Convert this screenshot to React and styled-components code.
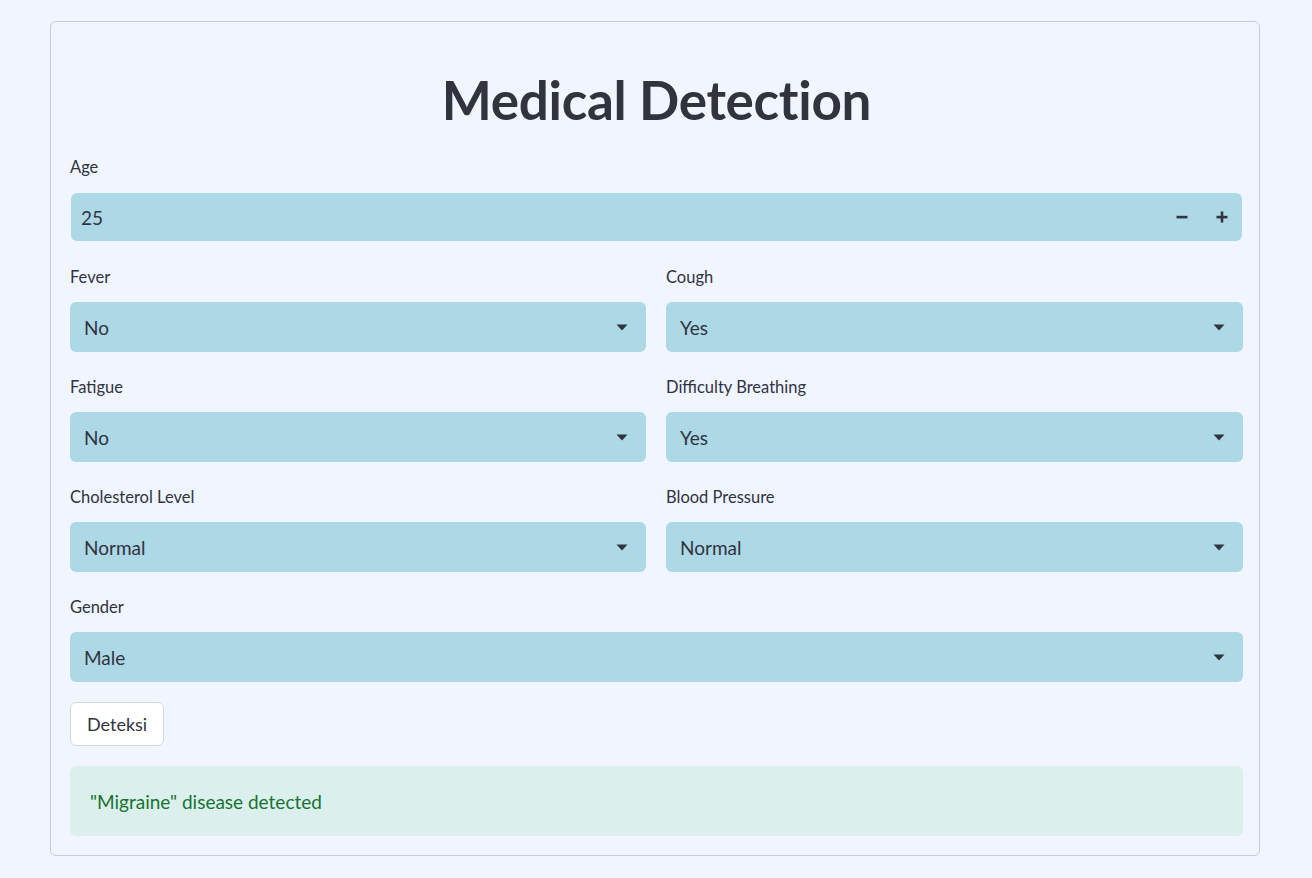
import styled, { createGlobalStyle } from "styled-components";

const GlobalStyle = createGlobalStyle`
  html, body {
    margin: 0;
    padding: 0;
    background: #f0f5ff;
    font-family: Lato, "Noto Sans", "Liberation Sans", sans-serif;
    color: #31333f;
  }
`;

const Page = styled.div`
  padding: 21px 0 22px;
`;

const Form = styled.div`
  width: 1210px;
  margin: 0 0 0 50px;
  box-sizing: border-box;
  border: 1px solid #c9ccd6;
  border-radius: 6px;
  padding: 38px 16px 19px 19px;
  display: flex;
  flex-direction: column;
`;

const Title = styled.h1`
  margin: 0 0 16px;
  font-size: 53px;
  line-height: 80px;
  font-weight: 700;
  text-align: center;
  color: #31333f;
  letter-spacing: -0.3px;
`;

const Grid = styled.div`
  display: grid;
  grid-template-columns: 576px 1fr;
  column-gap: 20px;
  row-gap: 24px;
`;

const Field = styled.div`
  display: flex;
  flex-direction: column;
  grid-column: ${({ $full }) => ($full ? "1 / -1" : "auto")};
`;

const Label = styled.label`
  font-size: 16.5px;
  line-height: 22px;
  margin-bottom: 14px;
  color: #31333f;
`;

const NumberBox = styled.div`
  height: 48px;
  margin: 1px 1px 1px 1px;
  background: #add8e6;
  border-radius: 6px;
  display: flex;
  align-items: center;
  padding-left: 10px;
  font-size: 19px;
`;

const NumberValue = styled.span`
  flex: 1;
`;

const StepButton = styled.span`
  width: 40px;
  height: 48px;
  display: flex;
  align-items: center;
  justify-content: center;
`;

const SelectBox = styled.div`
  height: 50px;
  background: #add8e6;
  border-radius: 6px;
  display: flex;
  align-items: center;
  justify-content: space-between;
  padding: 0 18px 0 14px;
  font-size: 19px;
`;

const Button = styled.button`
  align-self: flex-start;
  margin-top: 20px;
  height: 44px;
  padding: 0 16px;
  background: #fff;
  border: 1px solid #d5d7de;
  border-radius: 6px;
  font-family: inherit;
  font-size: 18px;
  color: #31333f;
`;

const Alert = styled.div`
  margin-top: 20px;
  height: 70px;
  box-sizing: border-box;
  background: #dbf0ec;
  border-radius: 6px;
  padding: 0 20px;
  display: flex;
  align-items: center;
  font-size: 19px;
  color: #177233;
`;

const Chevron = () => (
  <svg width="12" height="7" viewBox="0 0 12 7">
    <path d="M0.5 0.5 L11.5 0.5 L6 6.5 Z" fill="#31333f" />
  </svg>
);

const Minus = () => (
  <svg width="12" height="12" viewBox="0 0 12 12">
    <rect x="0.5" y="4.8" width="11" height="2.6" fill="#31333f" />
  </svg>
);

const Plus = () => (
  <svg width="12" height="12" viewBox="0 0 12 12">
    <rect x="0.5" y="4.8" width="11" height="2.6" fill="#31333f" />
    <rect x="4.7" y="0.5" width="2.6" height="11" fill="#31333f" />
  </svg>
);

const selects = [
  { label: "Fever", value: "No" },
  { label: "Cough", value: "Yes" },
  { label: "Fatigue", value: "No" },
  { label: "Difficulty Breathing", value: "Yes" },
  { label: "Cholesterol Level", value: "Normal" },
  { label: "Blood Pressure", value: "Normal" },
  { label: "Gender", value: "Male", full: true },
];

export default function App() {
  return (
    <Page>
      <GlobalStyle />
      <Form>
        <Title>Medical Detection</Title>
        <Grid>
          <Field $full>
            <Label>Age</Label>
            <NumberBox>
              <NumberValue>25</NumberValue>
              <StepButton><Minus /></StepButton>
              <StepButton><Plus /></StepButton>
            </NumberBox>
          </Field>
          {selects.map((s) => (
            <Field key={s.label} $full={s.full}>
              <Label>{s.label}</Label>
              <SelectBox>
                <span>{s.value}</span>
                <Chevron />
              </SelectBox>
            </Field>
          ))}
        </Grid>
        <Button>Deteksi</Button>
        <Alert>"Migraine" disease detected</Alert>
      </Form>
    </Page>
  );
}
